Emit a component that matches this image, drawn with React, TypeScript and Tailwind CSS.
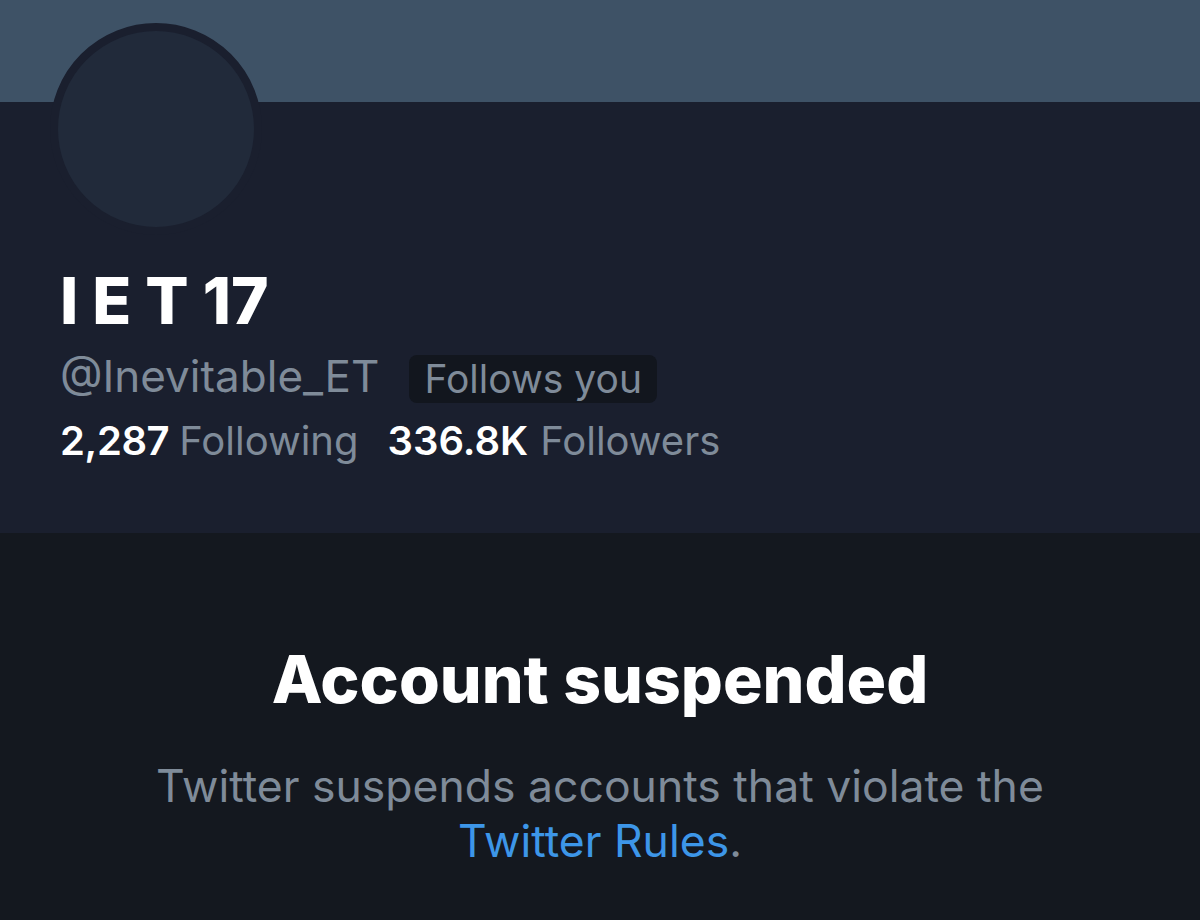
export default function App() {
  return (
    <div className="flex h-[920px] w-[1200px] flex-col overflow-hidden bg-[#14181f] font-['Inter',sans-serif]">
      {/* Banner */}
      <div className="h-[102px] shrink-0 bg-[#3e5266]" />

      {/* Profile header */}
      <div className="h-[431px] shrink-0 bg-[#1a1f2e] pl-[60px]">
        <div className="relative -mt-[79px] -ml-[10px] h-[212px] w-[212px] rounded-full border-[8px] border-[#1a1f2e] bg-[#212a3a]" />

        <h1 className="mt-[30px] text-[64px] font-extrabold leading-[72px] text-white">I E T 17</h1>

        <div className="mt-[18px] flex items-start">
          <span className="text-[44px] leading-[42px] text-[#7f8b99]">@Inevitable_ET</span>
          <span className="ml-[30px] h-[48px] rounded-[8px] bg-[#12161e] px-[15px] text-[39px] leading-[48px] text-[#7f8b99]">
            Follows you
          </span>
        </div>

        <div className="mt-[14px] flex text-[40px] leading-[48px]">
          <span className="font-semibold tracking-[-0.01em] text-white">2,287</span>
          <span className="ml-[10px] text-[#7f8b99]">Following</span>
          <span className="ml-[29px] font-semibold text-white">336.8K</span>
          <span className="ml-[12px] text-[#7f8b99]">Followers</span>
        </div>
      </div>

      {/* Suspended notice */}
      <div className="flex flex-1 flex-col items-center pt-[106px] text-center">
        <h2 className="text-[66px] font-extrabold leading-[80px] text-white">Account suspended</h2>
        <p className="mt-[40px] text-[44.5px] leading-[55px] text-[#7f8b99]">
          Twitter suspends accounts that violate the
          <br />
          <span className="text-[#3d96e8]">Twitter Rules</span>.
        </p>
      </div>
    </div>
  )
}
